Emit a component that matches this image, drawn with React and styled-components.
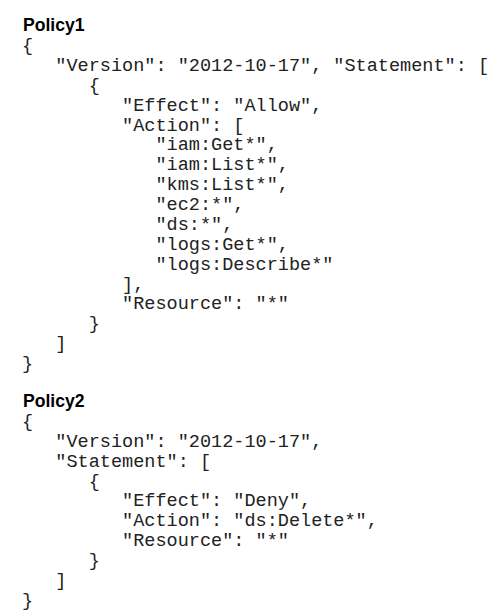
import React from "react";
import styled, { createGlobalStyle } from "styled-components";

const Global = createGlobalStyle`
  html, body { margin: 0; padding: 0; background: #fff; }
`;

const Page = styled.div`
  width: 501px;
  height: 616px;
  box-sizing: border-box;
  padding: 15px 0 0 22px;
  display: flex;
  flex-direction: column;
  gap: 16px;
  background: #fff;
  color: #000;
  overflow: hidden;
`;

const Block = styled.section`
  display: flex;
  flex-direction: column;
`;

const Title = styled.h2`
  margin: 0 0 2px 1px;
  font-family: "Liberation Sans", Arial, sans-serif;
  font-weight: 700;
  font-size: 17.6px;
  line-height: 20px;
  color: #000;
`;

const Code = styled.div`
  font-family: "Liberation Mono", "Courier New", monospace;
  font-size: 18.55px;
  line-height: 19.87px;
  color: #222;
  white-space: pre;
`;

const Line = styled.div`
  padding-left: ${(p) => p.$indent}ch;
`;

const policy1 = [
  [0, "{"],
  [3, '"Version": "2012-10-17", "Statement": ['],
  [6, "{"],
  [9, '"Effect": "Allow",'],
  [9, '"Action": ['],
  [12, '"iam:Get*",'],
  [12, '"iam:List*",'],
  [12, '"kms:List*",'],
  [12, '"ec2:*",'],
  [12, '"ds:*",'],
  [12, '"logs:Get*",'],
  [12, '"logs:Describe*"'],
  [9, "],"],
  [9, '"Resource": "*"'],
  [6, "}"],
  [3, "]"],
  [0, "}"],
];

const policy2 = [
  [0, "{"],
  [3, '"Version": "2012-10-17",'],
  [3, '"Statement": ['],
  [6, "{"],
  [9, '"Effect": "Deny",'],
  [9, '"Action": "ds:Delete*",'],
  [9, '"Resource": "*"'],
  [6, "}"],
  [3, "]"],
  [0, "}"],
];

function Policy({ title, lines }) {
  return (
    <Block>
      <Title>{title}</Title>
      <Code>
        {lines.map(([indent, text], i) => (
          <Line key={i} $indent={indent}>
            {text}
          </Line>
        ))}
      </Code>
    </Block>
  );
}

export default function App() {
  return (
    <>
      <Global />
      <Page>
        <Policy title="Policy1" lines={policy1} />
        <Policy title="Policy2" lines={policy2} />
      </Page>
    </>
  );
}
